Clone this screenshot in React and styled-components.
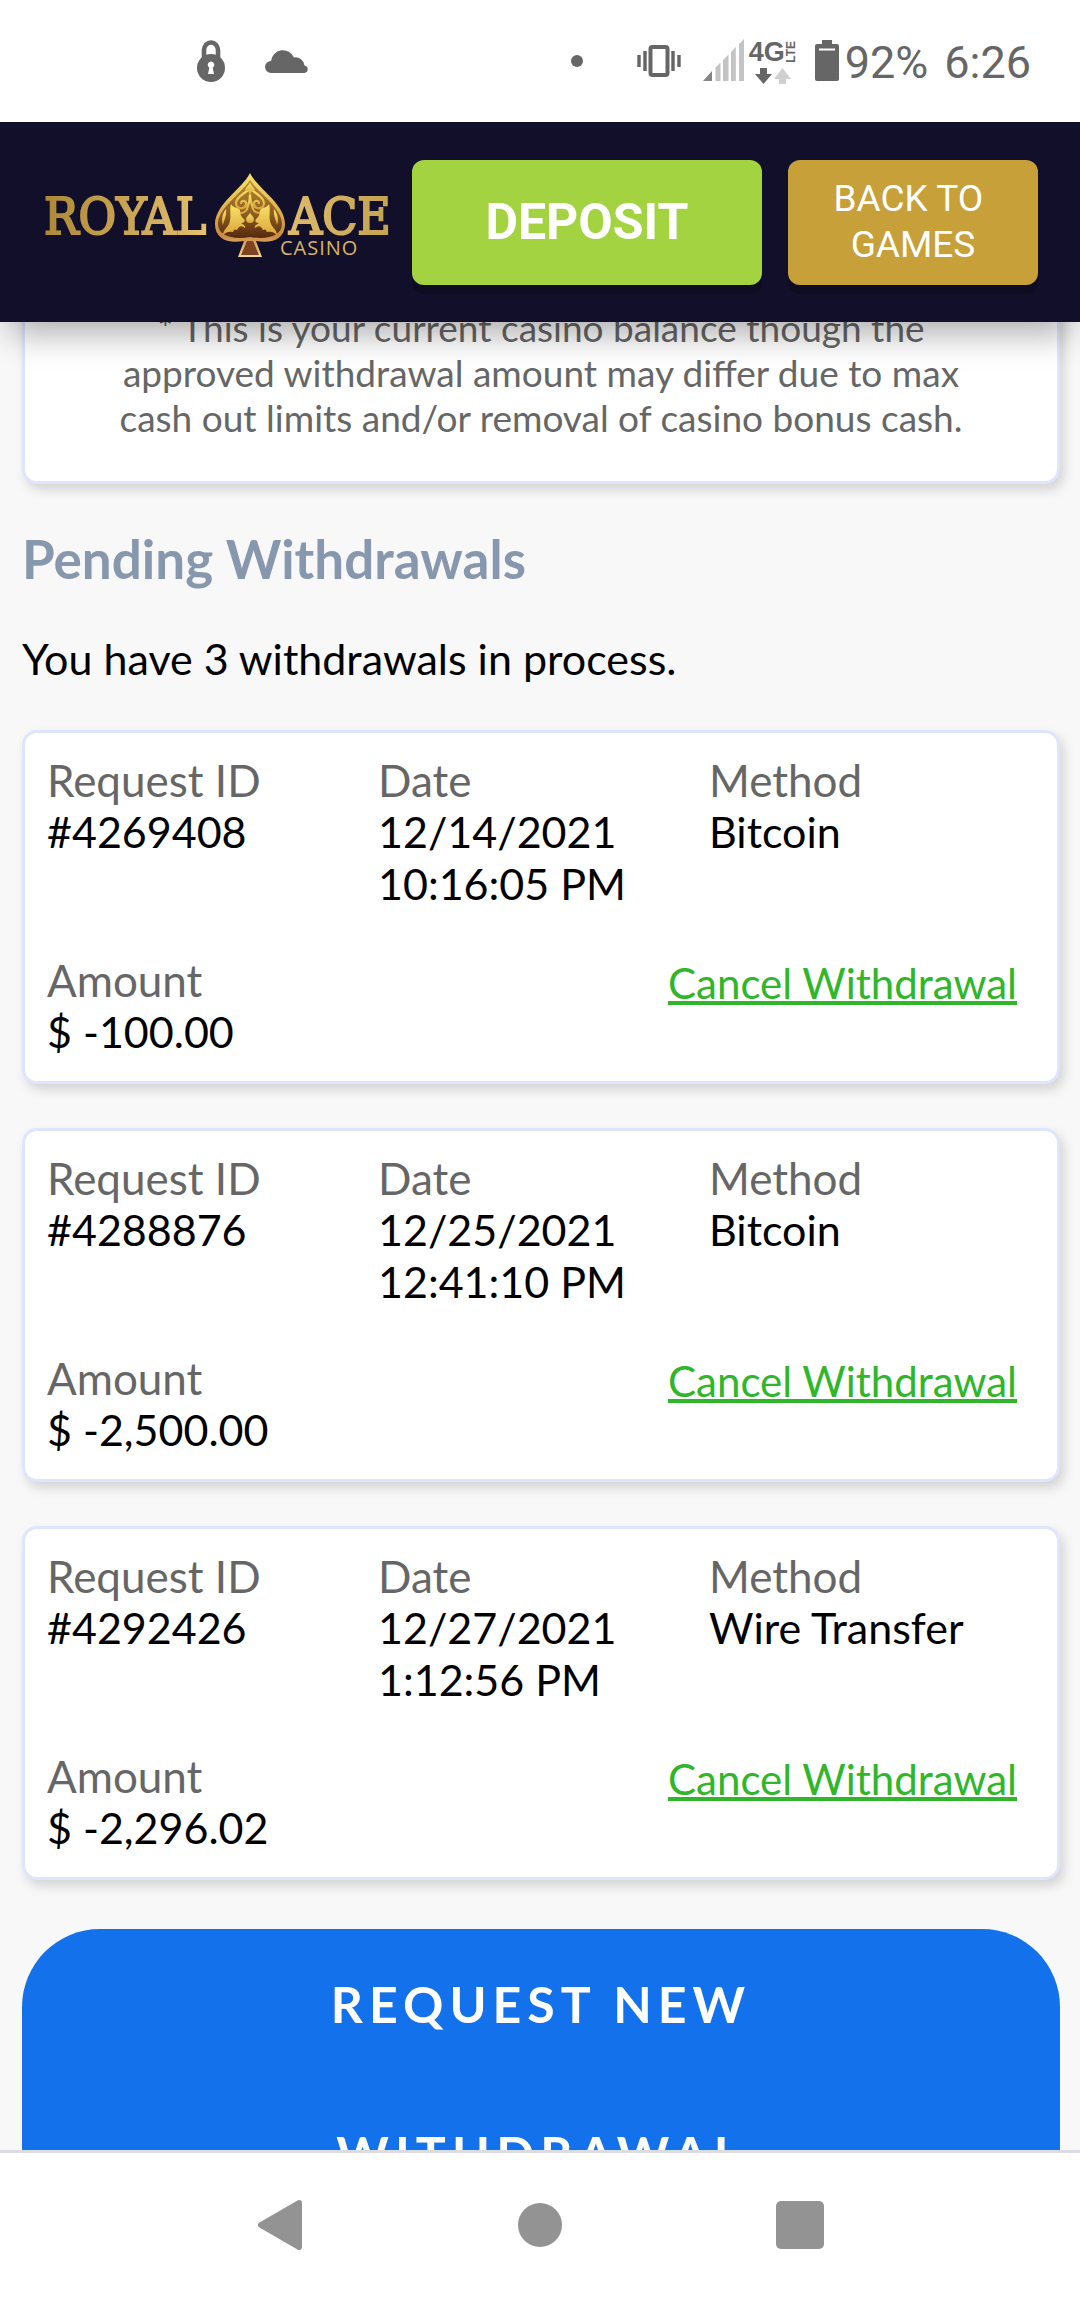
import React from "react";
import styled, { createGlobalStyle } from "styled-components";

const withdrawals = [
    {
        id: "#4269408",
        date: "12/14/2021",
        time: "10:16:05 PM",
        method: "Bitcoin",
        amount: "$ -100.00",
    },
    {
        id: "#4288876",
        date: "12/25/2021",
        time: "12:41:10 PM",
        method: "Bitcoin",
        amount: "$ -2,500.00",
    },
    {
        id: "#4292426",
        date: "12/27/2021",
        time: "1:12:56 PM",
        method: "Wire Transfer",
        amount: "$ -2,296.02",
    },
];

const LockIcon = () => (
    <svg width="28" height="42" viewBox="0 0 28 42" aria-hidden="true">
        <path
            d="M7 20V10a7 7.5 0 0 1 14 0v10"
            fill="none"
            stroke="#666"
            strokeWidth="4.6"
        />
        <circle cx="14" cy="28" r="14" fill="#666" />
        <path d="M14 21.5a3.4 3.4 0 0 1 1.7 6.3L17 34h-6l1.3-6.2a3.4 3.4 0 0 1 1.7-6.3z" fill="#fff" />
    </svg>
);

const CloudIcon = () => (
    <svg width="44" height="24" viewBox="0 0 44 24" aria-hidden="true">
        <path
            d="M6 24a6 6 0 0 1 0-12A12 12 0 0 1 29 8.5a9 9 0 0 1 10.5 8A3.8 3.8 0 0 1 39.5 24z"
            fill="#666"
        />
    </svg>
);

const VibrateIcon = () => (
    <svg width="44" height="32" viewBox="0 0 44 32" aria-hidden="true">
        <rect x="13.5" y="2" width="17" height="28" rx="2" fill="none" stroke="#666" strokeWidth="4" />
        <path
            d="M8 6v20M36 6v20M2 10v12M42 10v12"
            fill="none"
            stroke="#666"
            strokeWidth="3.4"
        />
    </svg>
);

const SignalIcon = () => (
    <svg width="41" height="42" viewBox="0 0 41 42" aria-hidden="true">
        <path d="M0 42L9 32v10z" fill="#858585" />
        <path
            d="M12.5 42V28.5l5-5V42zM20 42V21l5.5-5.5V42zM28 42V13l4.8-5V42zM36 42V5l5-5v42z"
            fill="#c4c4c4"
        />
    </svg>
);

const DataArrowsIcon = () => (
    <svg width="36" height="16" viewBox="0 0 36 16" aria-hidden="true">
        <path d="M5 0h7v6h5L8.5 16 0 6h5z" fill="#666" />
        <path d="M24 16h7v-5h5L27.5 0 19 11h5z" fill="#d0d0d0" />
    </svg>
);

const BatteryIcon = () => (
    <svg width="24" height="42" viewBox="0 0 24 42" aria-hidden="true">
        <path d="M7 0h10v4h5a2 2 0 0 1 2 2v33a2 2 0 0 1-2 2H2a2 2 0 0 1-2-2V6a2 2 0 0 1 2-2h5z" fill="#666" />
        <path d="M4 8.5h16v2H4z" fill="#fff" />
    </svg>
);

const Logo = () => (
    <LogoSvg viewBox="0 0 341 98" role="img" aria-label="Royal Ace Casino">
        <defs>
            <linearGradient id="royal" x1="0" x2="1">
                <stop offset="0" stopColor="#ad8836" />
                <stop offset="1" stopColor="#e3bf70" />
            </linearGradient>
            <linearGradient id="ace" x1="0" x2="1">
                <stop offset="0" stopColor="#dfbb6c" />
                <stop offset="1" stopColor="#c2a352" />
            </linearGradient>
            <linearGradient id="rim" x1="0" y1="0" x2="0" y2="1">
                <stop offset="0" stopColor="#f8e26c" />
                <stop offset="0.5" stopColor="#dba94a" />
                <stop offset="0.75" stopColor="#c98a45" />
                <stop offset="1" stopColor="#f2d79a" />
            </linearGradient>
            <linearGradient id="core" x1="0" y1="0" x2="0" y2="1">
                <stop offset="0" stopColor="#b98a2e" />
                <stop offset="0.6" stopColor="#8c5c22" />
                <stop offset="1" stopColor="#54290e" />
            </linearGradient>
            <linearGradient id="leaf" x1="0" y1="0" x2="0" y2="1">
                <stop offset="0" stopColor="#f7e366" />
                <stop offset="1" stopColor="#dca63c" />
            </linearGradient>
        </defs>
        <LogoText x="-1" y="61" fill="url(#royal)" stroke="url(#royal)">
            ROYAL
        </LogoText>
        <LogoText x="244" y="61" fill="url(#ace)" stroke="url(#ace)">
            ACE
        </LogoText>
        <LogoSmall x="235" y="82">
            CASINO
        </LogoSmall>
        <path
            d="M205 0C212 15 240 31 240 51c0 15-13 20-29 17l6 16h-24l6-16c-16 3-29-2-29-17 0-20 28-36 35-51z"
            fill="url(#rim)"
        />
        <path
            d="M205 7c8 13 32 28 32 44 0 12-15 16-32 13-17 3-32-1-32-13 0-16 24-31 32-44z"
            fill="url(#core)"
        />
        <path d="M202 68h6l6 14h-18z" fill="#7e431f" />
        <g fill="none" stroke="url(#leaf)" strokeWidth="2.2" strokeLinecap="round">
            <path d="M203 17c-5 5-11 6-12 13 0 6 8 7 10 2 1-4-4-6-5-2" />
            <path d="M207 17c5 5 11 6 12 13 0 6-8 7-10 2-1-4 4-6 5-2" />
            <path d="M205 22c0 7-2 10-3 14-1 3-4 4-8 4M205 22c0 7 2 10 3 14 1 3 4 4 8 4" />
        </g>
        <g fill="url(#leaf)">
            <path d="M205 9c1 4 5 5 5 9-2-1-4 0-5 4-1-4-3-5-5-4 0-4 4-5 5-9z" />
            <path d="M186 31c2 4 6 3 9 6 0 4 1 7 4 9 2 3-1 4-3 4 3 2 5 3 4 5-4-3-6-2-8 2-2-1-3-1-4 2-4-1-7 0-10 3 0-5 4-7 6-11 3-7 0-13 2-20z" />
            <path d="M224 31c-2 4-6 3-9 6 0 4-1 7-4 9-2 3 1 4 3 4-3 2-5 3-4 5 4-3 6-2 8 2 2-1 3-1 4 2 4-1 7 0 10 3 0-5-4-7-6-11-3-7 0-13-2-20z" />
            <path d="M205 40c2 3 4 4 4 6a4 4 0 0 1-8 0c0-2 2-3 4-6z" />
            <path d="M181 36c-4 5-5 11-3 16 1-5 4-9 3-16zM229 36c4 5 5 11 3 16-1-5-4-9-3-16z" />
        </g>
    </LogoSvg>
);

const Field = ({ label, children }) => (
    <div>
        <Label>{label}</Label>
        <Value>{children}</Value>
    </div>
);

const WithdrawalCard = ({ item }) => (
    <Card as="article">
        <FieldGrid>
            <Field label="Request ID">{item.id}</Field>
            <Field label="Date">
                {item.date}
                <br />
                {item.time}
            </Field>
            <Field label="Method">{item.method}</Field>
        </FieldGrid>
        <AmountRow>
            <Field label="Amount">{item.amount}</Field>
            <CancelLink href="#cancel">Cancel Withdrawal</CancelLink>
        </AmountRow>
    </Card>
);

export default function App() {
    return (
        <Screen>
            <GlobalStyle />
            <StatusBar>
                <StatusGroup $gap={40}>
                    <LockIcon />
                    <CloudIcon />
                </StatusGroup>
                <StatusGroup $gap={6}>
                    <Dot />
                    <VibrateIcon />
                    <Network>
                        <SignalIcon />
                        <NetworkType>
                            <NetworkName>
                                4G<Lte>LTE</Lte>
                            </NetworkName>
                            <DataArrowsIcon />
                        </NetworkType>
                    </Network>
                    <BatteryIcon />
                    <StatusText>92%</StatusText>
                    <Clock>6:26</Clock>
                </StatusGroup>
            </StatusBar>

            <Header>
                <Logo />
                <HeaderButton $grow={7} $color="#a4d341" $primary>
                    DEPOSIT
                </HeaderButton>
                <HeaderButton $grow={5} $color="#c7a03a">
                    BACK TO&nbsp;
                    <br />
                    GAMES
                </HeaderButton>
            </Header>

            <Main>
                <NoteCard>
                    * This is your current casino balance though the
                    approved withdrawal amount may differ due to max cash
                    out limits and/or removal of casino bonus cash.
                </NoteCard>
                <Title>Pending Withdrawals</Title>
                <Summary>
                    You have {withdrawals.length} withdrawals in process.
                </Summary>
                <CardList>
                    {withdrawals.map((item) => (
                        <WithdrawalCard key={item.id} item={item} />
                    ))}
                </CardList>
                <RequestButton>
                    Request New
                    <br />
                    Withdrawal
                </RequestButton>
            </Main>

            <NavBar>
                <NavButton aria-label="Back">
                    <svg width="44" height="50" viewBox="0 0 44 50">
                        <path d="M41 3L3 25l38 22z" fill="#939393" stroke="#939393" strokeWidth="6" strokeLinejoin="round" />
                    </svg>
                </NavButton>
                <NavButton aria-label="Home">
                    <svg width="44" height="44" viewBox="0 0 44 44">
                        <circle cx="22" cy="22" r="22" fill="#939393" />
                    </svg>
                </NavButton>
                <NavButton aria-label="Recent apps">
                    <svg width="48" height="48" viewBox="0 0 48 48">
                        <rect width="48" height="48" rx="5" fill="#939393" />
                    </svg>
                </NavButton>
            </NavBar>
        </Screen>
    );
}

const GlobalStyle = createGlobalStyle`
    * {
        box-sizing: border-box;
    }

    body {
        margin: 0;
        background: #f8f8f8;
        font-family: Lato, "Open Sans", sans-serif;
    }

    button {
        border: 0;
        font-family: inherit;
        cursor: pointer;
    }

    svg {
        display: block;
        flex: none;
    }
`;

const Screen = styled.div`
    display: flex;
    flex-direction: column;
    height: 100vh;
`;

const StatusBar = styled.div`
    position: relative;
    z-index: 2;
    display: flex;
    align-items: center;
    justify-content: space-between;
    flex: none;
    height: 122px;
    padding: 0 49px 0 197px;
    background: #fff;
    color: #666;
    font-family: Roboto, sans-serif;
`;

const StatusGroup = styled.div`
    display: flex;
    align-items: center;
    gap: ${(props) => props.$gap}px;
`;

const Dot = styled.span`
    width: 12px;
    height: 12px;
    margin-right: 48px;
    border-radius: 50%;
    background: #666;
`;

const Network = styled.div`
    display: flex;
    gap: 5px;
    margin: 0 12px 0 16px;
`;

const NetworkType = styled.div`
    display: flex;
    flex-direction: column;
    align-items: center;
    gap: 3px;
`;

const NetworkName = styled.div`
    display: flex;
    align-items: center;
    height: 26px;
    font-family: "Liberation Sans", sans-serif;
    font-size: 27px;
    font-weight: bold;
    line-height: 26px;
`;

const Lte = styled.span`
    font-size: 12px;
    line-height: 12px;
    writing-mode: vertical-rl;
    rotate: 180deg;
`;

const StatusText = styled.span`
    padding-top: 3px;
    font-size: 45px;
    line-height: 52px;
`;

const Clock = styled(StatusText)`
    margin-left: 10px;
`;

const Header = styled.header`
    position: relative;
    z-index: 1;
    display: flex;
    align-items: center;
    flex: none;
    gap: 26px;
    height: 200px;
    padding: 0 42px 0 45px;
    background: #120f2a;
    box-shadow: 0 22px 32px -10px rgba(0, 0, 0, 0.32);
`;

const LogoSvg = styled.svg`
    width: 341px;
    height: 98px;
    overflow: visible;
`;

const LogoText = styled.text`
    font-family: "DejaVu Serif Condensed", "DejaVu Serif", serif;
    font-size: 51px;
    stroke-width: 2px;
`;

const LogoSmall = styled.text`
    fill: #d6b365;
    font-family: "Open Sans", sans-serif;
    font-size: 20px;
    letter-spacing: 1px;
`;

const HeaderButton = styled.button`
    flex: ${(props) => props.$grow} 1 0;
    height: 125px;
    padding: 0;
    border-radius: 12px;
    background: ${(props) => props.$color};
    box-shadow: 0 9px 0 rgba(0, 0, 0, 0.2);
    color: #fff;
    font-family: Roboto, sans-serif;
    font-size: ${(props) => (props.$primary ? 50 : 37)}px;
    font-weight: ${(props) => (props.$primary ? 700 : 400)};
    line-height: 46px;
`;

const Main = styled.main`
    flex: 1;
    min-height: 0;
    padding: 0 20px 0 22px;
    overflow: hidden;
`;

const Card = styled.div`
    padding: 21px 17px 23px 22px;
    border: 3px solid #dfe5ff;
    border-radius: 15px;
    background: #fff;
    box-shadow: 4px 6px 12px rgba(0, 0, 0, 0.15);
`;

/* starts partly scrolled under the header */
const NoteCard = styled(Card)`
    margin-top: -38px;
    padding: 18px 80px 41px;
    color: #666;
    font-size: 37px;
    line-height: 45px;
    text-align: center;
`;

const Title = styled.h2`
    margin: 45px 0 44px;
    color: #8798ae;
    font-size: 53px;
    font-weight: bold;
    line-height: 60px;
`;

const Summary = styled.p`
    margin: 0 0 45px;
    font-size: 43px;
    line-height: 52px;
`;

const CardList = styled.div`
    display: grid;
    gap: 44px;
`;

const FieldGrid = styled.div`
    display: grid;
    grid-template-columns: repeat(3, 1fr);
    margin-bottom: 44px;
    font-size: 44px;
    line-height: 52px;
`;

const AmountRow = styled.div`
    display: flex;
    align-items: flex-start;
    justify-content: space-between;
    padding-right: 23px;
    font-size: 44px;
    line-height: 52px;
`;

const Label = styled.div`
    color: #666;
`;

const Value = styled.div`
    color: #000;
    font-size: 43px;
`;

const CancelLink = styled.a`
    margin-top: 3px;
    color: #2fb62a;
    font-size: 42px;
    text-decoration-thickness: 4px;
`;

const RequestButton = styled.button`
    display: block;
    width: 100%;
    margin-top: 49px;
    padding: 0;
    border-radius: 78px;
    background: #1372eb;
    color: #fff;
    font-size: 50px;
    font-weight: bold;
    line-height: 150px;
    letter-spacing: 6px;
    text-transform: uppercase;
`;

const NavBar = styled.nav`
    display: flex;
    align-items: center;
    justify-content: center;
    flex: none;
    gap: 170px;
    height: 150px;
    padding-bottom: 3px;
    border-top: 3px solid #dadce0;
    background: #fff;
`;

const NavButton = styled.button`
    display: grid;
    place-items: center;
    width: 90px;
    height: 90px;
    padding: 0;
    background: none;
`;
